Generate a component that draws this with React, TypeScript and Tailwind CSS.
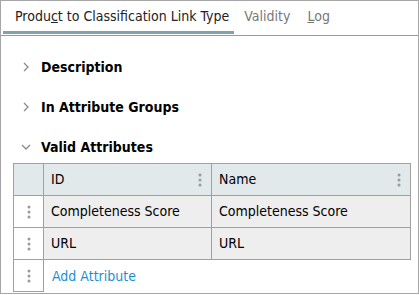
import React from 'react';

const FONT = { fontFamily: '"DejaVu Sans Condensed", "DejaVu Sans", sans-serif' };

const Kebab = () => (
    <svg width="4" height="14" viewBox="0 0 4 14" className="block">
        <circle cx="2" cy="2" r="1.5" fill="#9a9a9a" />
        <circle cx="2" cy="7" r="1.5" fill="#9a9a9a" />
        <circle cx="2" cy="12" r="1.5" fill="#9a9a9a" />
    </svg>
);

const Chevron = ({ open }: { open?: boolean }) => (
    <svg width="10" height="10" viewBox="0 0 10 10" className="block">
        {open ? (
            <path d="M1 3 L5 7 L9 3" stroke="#8a8a8a" strokeWidth="1.3" fill="none" />
        ) : (
            <path d="M3 1 L7 5 L3 9" stroke="#8a8a8a" strokeWidth="1.3" fill="none" />
        )}
    </svg>
);

const Section = ({ title, open }: { title: string; open?: boolean }) => (
    <div className="flex items-center h-[20px] pl-[20px] gap-[10px]">
        <Chevron open={open} />
        <span className="text-[14px] font-bold text-black">{title}</span>
    </div>
);

const rows = [
    { id: 'Completeness Score', name: 'Completeness Score' },
    { id: 'URL', name: 'URL' },
];

export default function App() {
    return (
        <div style={FONT} className="w-[419px] h-[294px] bg-white border border-[#a6a6a6] overflow-hidden">
            {/* Tabs */}
            <div className="flex items-end h-[35px] border-b border-[#7fa3ad] pl-[2px]">
                <div className="h-[33px] mb-[1px] pl-[12px] pr-[5px] flex items-center border-b-[3px] border-[#7fa3ad] text-[14px] text-[#222]">
                    <span>Produ<span className="underline">c</span>t to Classification Link Type</span>
                </div>
                <div className="h-[33px] mb-[1px] pl-[10px] pr-[7px] flex items-center text-[14px] text-[#777] border-b-[3px] border-transparent">
                    Validity
                </div>
                <div className="h-[33px] mb-[1px] px-[10px] flex items-center text-[14px] text-[#777] border-b-[3px] border-transparent">
                    <span><span className="underline">L</span>og</span>
                </div>
            </div>

            <div className="pt-[21px] flex flex-col gap-[20px]">
                <Section title="Description" />
                <Section title="In Attribute Groups" />
                <Section title="Valid Attributes" open />
            </div>

            {/* Table */}
            <div className="ml-[12px] mt-[6px] w-[398px] text-[14px] text-black">
                <div className="grid grid-cols-[30px_168px_199px] border-l border-t border-[#a0a0a0]">
                    <div className="h-[32px] bg-[#e1e9eb] border-r border-b border-[#a0a0a0]" />
                    <div className="h-[32px] bg-[#e1e9eb] border-r border-b border-[#a0a0a0] flex items-center justify-between pl-[7px] pr-[9px]">
                        <span>ID</span>
                        <Kebab />
                    </div>
                    <div className="h-[32px] bg-[#e1e9eb] border-r border-b border-[#a0a0a0] flex items-center justify-between pl-[7px] pr-[9px]">
                        <span>Name</span>
                        <Kebab />
                    </div>
                    {rows.map((r) => (
                        <React.Fragment key={r.id}>
                            <div className="h-[32px] bg-white border-r border-b border-[#a0a0a0] flex items-center justify-center">
                                <Kebab />
                            </div>
                            <div className="h-[32px] bg-[#eeeeee] border-r border-b border-[#a0a0a0] flex items-center pl-[7px]">
                                {r.id}
                            </div>
                            <div className="h-[32px] bg-[#eeeeee] border-r border-b border-[#a0a0a0] flex items-center pl-[7px]">
                                {r.name}
                            </div>
                        </React.Fragment>
                    ))}
                </div>
                <div className="flex">
                    <div className="w-[31px] h-[32px] border-l border-r border-b border-[#a0a0a0] flex items-center justify-center">
                        <Kebab />
                    </div>
                    <div className="flex items-center pl-[8px] text-[#1b8fd3]">Add Attribute</div>
                </div>
            </div>
        </div>
    );
}
